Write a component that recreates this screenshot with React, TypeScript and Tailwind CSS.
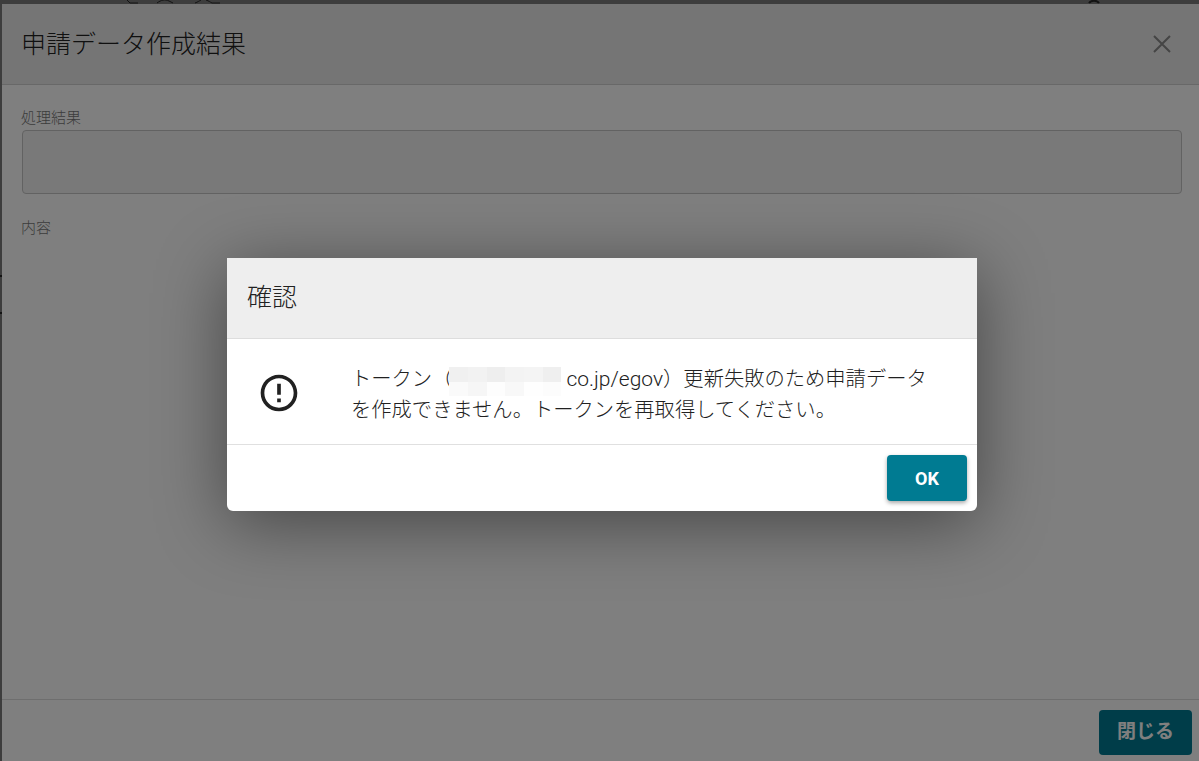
const cjk = "font-['Roboto','Noto_Sans_CJK_JP',sans-serif]";

const mosaic = [
  "bg-[#f0f0f0]", "bg-[#f2f2f2]", "bg-[#eeeeee]", "bg-[#f3f3f3]", "bg-[#f4f4f4]", "bg-[#efefef]",
  "bg-[#fafafa]", "bg-[#f6f6f6]", "bg-[#fdfdfd]", "bg-[#f8f8f8]", "bg-[#fefefe]", "bg-[#fcfcfc]",
];

function WarningIcon() {
  return (
    <svg viewBox="0 0 24 24" className="w-11 h-11 fill-[#212121]">
      <path d="M11 15h2v2h-2zm0-8h2v6h-2zm.99-5C6.47 2 2 6.48 2 12s4.47 10 9.99 10C17.52 22 22 17.52 22 12S17.52 2 11.99 2zM12 20c-4.42 0-8-3.58-8-8s3.58-8 8-8 8 3.58 8 8-3.58 8-8 8z" />
    </svg>
  );
}

// bits of the page behind, showing in the strip above and left of the dialog
function PageBehind() {
  return (
    <svg viewBox="0 0 1199 340" className="absolute left-0 top-0 w-[1199px] h-[340px] fill-none stroke-[#262626]">
      <path d="M127 0l3 3h8M157 3c4-3 8-4 12-2l4 2M195 3c3-1 4-2 6-3M206 0c3 1 4 2 6 3h8" />
      <path d="M1089 3c2-3 8-3 10 0" strokeWidth="2" />
      <path d="M0 276h2M0 313h2" strokeWidth="2" />
    </svg>
  );
}

function ResultDialog() {
  return (
    <div className="relative ml-[2px] mt-[4px] h-[757px] flex flex-col bg-white">
      <div className="h-[81px] shrink-0 flex items-center justify-between pl-5 pr-7 bg-[#ebebeb] border-b border-[#d0d0d0]">
        <h1 className="-ml-px mt-px text-[25px] font-light text-[#212121]">申請データ作成結果</h1>
        <svg viewBox="0 0 18 18" className="w-[18px] h-[18px] stroke-[#8a8a8a] stroke-2 fill-none">
          <path d="M1 1l16 16M17 1L1 17" />
        </svg>
      </div>

      <div className="flex-1 pl-5 pr-[17px] pt-[23px]">
        <div className="-ml-px text-[15px] leading-5 font-light text-[#777]">処理結果</div>
        <div className="h-16 mt-[2px] rounded border border-[#c4c4c4] bg-[#f2f2f2]" />
        <div className="-ml-px mt-[24px] text-[15px] leading-5 font-light text-[#777]">内容</div>
      </div>

      <div className="h-[62px] shrink-0 flex items-start justify-end pt-[10px] pr-[7px] border-t border-[#dcdcdc]">
        <button className="w-[93px] h-[45px] rounded bg-[#007b92] text-white text-[19px] font-bold">閉じる</button>
      </div>
    </div>
  );
}

function ConfirmDialog() {
  return (
    <div className="w-[750px] h-[253px] ml-[227px] mt-[258px] flex flex-col rounded-b-md bg-white shadow-[0_12px_70px_rgba(0,0,0,0.45)]">
      <div className="h-[81px] shrink-0 flex items-center pl-5 bg-[#eeeeee] border-b border-[#dddddd]">
        <h2 className="text-[25px] font-light text-[#212121]">確認</h2>
      </div>

      <div className="h-[106px] shrink-0 flex items-center border-b border-[#e0e0e0]">
        <div className="w-[125px] shrink-0 flex justify-center pr-[21px] pt-[2px]">
          <WarningIcon />
        </div>
        <p className="-ml-px pt-[7px] text-[20.3px] leading-[31px] font-light text-[#212121]">
          トークン（
          {/* masked address, painted over the text line */}
          <span className="relative inline-block w-[112px] h-0 -ml-[3px] mr-[5px]">
            <span className="absolute left-0 -top-[19px] w-[112px] h-[29px] grid grid-cols-6">
              {mosaic.map((color, i) => (
                <span key={i} className={color} />
              ))}
            </span>
          </span>
          <span className="text-[21px]">co.jp/egov</span>）更新失敗のため申請データ
          <br />
          を作成できません。トークンを再取得してください。
        </p>
      </div>

      <div className="flex-1 flex items-start justify-end pt-[10px] pr-[10px]">
        <button className="w-20 h-[46px] rounded bg-[#007b92] text-white text-[18px] font-bold shadow-[0_2px_4px_rgba(0,0,0,0.35)]">
          OK
        </button>
      </div>
    </div>
  );
}

export default function App() {
  return (
    <div className={`relative w-[1199px] h-[761px] overflow-hidden bg-[#7a7a7a] ${cjk}`}>
      <PageBehind />
      <ResultDialog />
      {/* Backdrop + confirm dialog over the result dialog */}
      <div className="absolute inset-0 bg-black/50">
        <ConfirmDialog />
      </div>
    </div>
  );
}
